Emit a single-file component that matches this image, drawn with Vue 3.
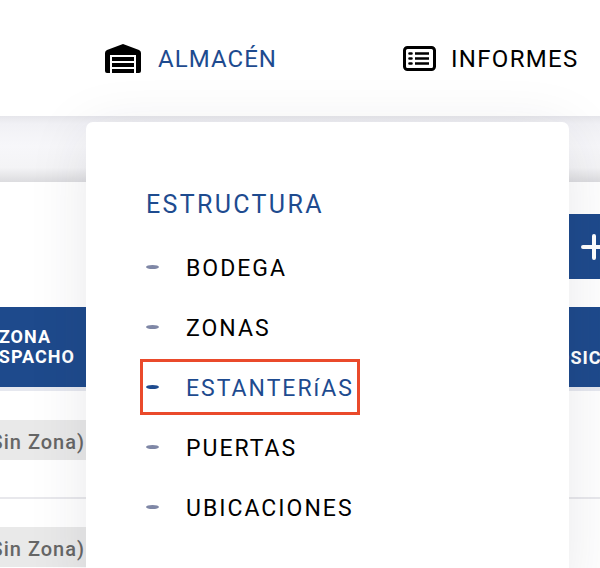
<script setup>
const items = [
  { label: 'BODEGA' },
  { label: 'ZONAS' },
  { label: 'ESTANTERíAS', active: true },
  { label: 'PUERTAS' },
  { label: 'UBICACIONES' },
]
</script>

<template>
  <div class="page">
    <header class="topbar">
      <a class="nav nav-store">
        <svg class="ico-store" viewBox="0 0 36 29" width="36" height="29">
          <path d="M18 0 L34 6 Q36 7 36 9 V27 Q36 29 34 29 H31 V11 H5 V29 H2 Q0 29 0 27 V9 Q0 7 2 6 Z" fill="#000" />
          <rect x="7" y="13" width="22" height="4" fill="#000" />
          <rect x="7" y="19" width="22" height="4" fill="#000" />
          <rect x="7" y="25" width="22" height="4" fill="#000" />
        </svg>
        <span class="nav-label">ALMACÉN</span>
      </a>
      <a class="nav nav-report">
        <svg class="ico-report" viewBox="0 0 33 25" width="33" height="25" fill="none" stroke="#000">
          <rect x="1.5" y="1.5" width="30" height="22" rx="3" stroke-width="3" />
          <path d="M12 7.5H26M12 12.5H26M12 17.5H26" stroke-width="2.4" />
          <path d="M6.5 7.5H8.5M6.5 12.5H8.5M6.5 17.5H8.5" stroke-width="2.6" stroke-linecap="round" />
        </svg>
        <span class="nav-label">INFORMES</span>
      </a>
    </header>

    <div class="band"></div>

    <main class="content">
      <div class="actions">
        <button class="add">
          <svg viewBox="0 0 26 26" width="26" height="26" fill="none" stroke="#fff" stroke-width="4" stroke-linecap="round">
            <path d="M2 13H24M13 2V24" />
          </svg>
        </button>
      </div>
      <div class="thead">
        <div class="th th-zona">ZONA<br />DESPACHO</div>
        <div class="th th-right">POSICIÓN</div>
      </div>
      <div class="row"><span class="chip"><span>(Sin Zona)</span></span></div>
      <div class="row"><span class="chip"><span>(Sin Zona)</span></span></div>
    </main>

    <section class="menu">
      <h3 class="menu-title">ESTRUCTURA</h3>
      <ul class="menu-list">
        <li v-for="item in items" :key="item.label" class="menu-item" :class="{ active: item.active }">
          <i class="dash"></i>
          <span class="menu-label">{{ item.label }}</span>
        </li>
      </ul>
      <div class="highlight"></div>
    </section>
  </div>
</template>

<style>
html, body { margin: 0; padding: 0; background: #fff; }
</style>

<style scoped>
.page {
  position: relative;
  width: 600px;
  height: 568px;
  overflow: hidden;
  background: #fff;
  font-family: "Roboto", "Liberation Sans", sans-serif;
}
.topbar {
  height: 116px;
  display: flex;
  align-items: flex-start;
  box-sizing: border-box;
  padding: 43px 0 0 105px;
  background: #fff;
}
.nav {
  display: flex;
  align-items: center;
  height: 30px;
  font-size: 24px;
  letter-spacing: 1.05px;
  white-space: nowrap;
}
.nav-label { padding-top: 2px; }
.nav-store { color: #1e4b8f; width: 298px; }
.ico-store { margin-right: 17px; }
.nav-report { color: #000; letter-spacing: 1.3px; }
.ico-report { margin-right: 15px; }
.band {
  height: 66px;
  background: linear-gradient(180deg, #e6e6eb 0%, #f1f1f5 12%, #f7f7fa 45%, #f4f4f6 78%, #dcdcdf 100%);
}
.content { background: #fff; }
.actions {
  height: 125px;
  display: flex;
  justify-content: flex-end;
  align-items: flex-start;
  padding-top: 32px;
  box-sizing: border-box;
}
.add {
  width: 60px;
  height: 65px;
  margin-right: -29px;
  border: 0;
  padding: 0 0 0 12px;
  background: #1e4a8c;
  display: flex;
  align-items: center;
  box-sizing: border-box;
}
.thead {
  height: 84px;
  box-sizing: border-box;
  border-bottom: 4px solid #e6e8ef;
  background: #1e4a8c;
  display: flex;
  justify-content: space-between;
  align-items: center;
  color: #fff;
  font-weight: 700;
  font-size: 18px;
  line-height: 20px;
  letter-spacing: 1px;
  text-align: center;
}
.th-zona { margin-left: -25px; }
.th-right { margin-right: -35px; margin-top: 22px; }
.row {
  height: 108px;
  box-sizing: border-box;
  padding-top: 29px;
  border-bottom: 2px solid #e8e8ec;
}
.row + .row { padding-top: 28px; }
.chip {
  display: flex;
  justify-content: flex-end;
  width: 200px;
  height: 40px;
  line-height: 45px;
  background: #e9e9e9;
  color: #666;
  font-size: 20px;
  font-weight: 500;
  letter-spacing: 1px;
  padding-right: 115px;
  box-sizing: border-box;
  white-space: nowrap;
}
.menu {
  position: absolute;
  left: 86px;
  top: 122px;
  width: 483px;
  height: 470px;
  box-sizing: border-box;
  padding: 67px 0 0 60px;
  background: #fff;
  border-radius: 7px;
  box-shadow: 0 10px 60px rgba(40, 40, 60, 0.1);
}
.menu-title {
  margin: 0;
  color: #1e4b8f;
  font-size: 25px;
  line-height: 32px;
  font-weight: 400;
  letter-spacing: 2.35px;
}
.menu-list { list-style: none; margin: 16px 0 0; padding: 0; }
.menu-item {
  display: flex;
  align-items: center;
  height: 60px;
  color: #000;
  font-size: 23px;
  letter-spacing: 2px;
}
.menu-label { padding-top: 2px; }
.dash {
  display: block;
  width: 13px;
  height: 4px;
  border-radius: 50%;
  background: #7f87a6;
  margin-right: 27px;
}
.menu-item.active { color: #1e4b8f; }
.menu-item.active .dash { background: #1e4b8f; }
.highlight {
  position: absolute;
  left: 54px;
  top: 237px;
  width: 214px;
  height: 50px;
  border: 3px solid #ea4a2b;
  box-sizing: content-box;
}
</style>
